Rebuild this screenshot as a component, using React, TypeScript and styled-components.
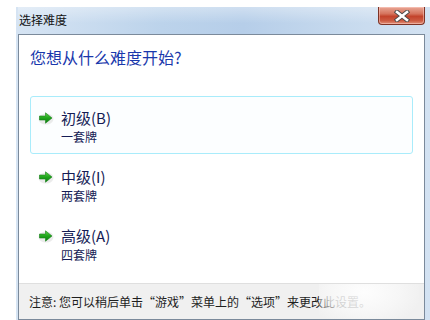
import styled, { createGlobalStyle } from "styled-components";

const GlobalStyle = createGlobalStyle`
  html, body {
    margin: 0;
    padding: 0;
    background: #ffffff;
  }
  body {
    font-family: "Noto Sans CJK SC", "Noto Sans", sans-serif;
  }
`;

interface Level {
  title: string;
  desc: string;
  selected?: boolean;
}

const levels: Level[] = [
  { title: "初级(B)", desc: "一套牌", selected: true },
  { title: "中级(I)", desc: "两套牌" },
  { title: "高级(A)", desc: "四套牌" },
];

function GreenArrow() {
  return (
    <svg width="16" height="14" viewBox="0 0 16 14">
      <defs>
        <linearGradient id="ag" x1="0" y1="0" x2="0" y2="1">
          <stop offset="0" stopColor="#5fd34a" />
          <stop offset="0.5" stopColor="#1fa51b" />
          <stop offset="1" stopColor="#0c7d12" />
        </linearGradient>
      </defs>
      <ellipse cx="8" cy="8" rx="7.5" ry="5.5" fill="#e2e2e2" opacity="0.7" />
      <path
        d="M1.5 5 H7.5 V1.8 L14 7 L7.5 12.2 V9 H1.5 Z"
        fill="url(#ag)"
        stroke="#17801a"
        strokeWidth="0.6"
        strokeLinejoin="round"
      />
    </svg>
  );
}

function CloseGlyph() {
  return (
    <svg width="16" height="12" viewBox="0 0 16 12">
      <path
        d="M3 2 L13 10 M13 2 L3 10"
        stroke="#4a4a4a"
        strokeWidth="4.4"
        strokeLinecap="square"
      />
      <path
        d="M3 2 L13 10 M13 2 L3 10"
        stroke="#ffffff"
        strokeWidth="2.6"
        strokeLinecap="square"
      />
    </svg>
  );
}

export default function App() {
  return (
    <>
      <GlobalStyle />
      <Window>
        <TitleBar>
          <TitleText>选择难度</TitleText>
          <CloseButton>
            <CloseGlyph />
          </CloseButton>
        </TitleBar>
        <Panel>
          <Heading>您想从什么难度开始?</Heading>
          <OptionList>
            {levels.map((lv) => (
              <OptionLink key={lv.title} $selected={lv.selected}>
                <ArrowBox>
                  <GreenArrow />
                </ArrowBox>
                <OptionText>
                  <OptionTitle>{lv.title}</OptionTitle>
                  <OptionDesc>{lv.desc}</OptionDesc>
                </OptionText>
              </OptionLink>
            ))}
          </OptionList>
          <Footer>
            <FooterText>
              注意: 您可以稍后单击“游戏”菜单上的“选项”来更改此设置。
            </FooterText>
            <Watermark />
          </Footer>
        </Panel>
      </Window>
    </>
  );
}

const Window = styled.div`
  margin: 7px 0 0 16px;
  width: 414px;
  height: 313px;
  box-sizing: border-box;
  padding: 0 5px 0 2px;
  display: flex;
  flex-direction: column;
  background: linear-gradient(
    90deg,
    #d6e4f3 0%,
    #bcd3eb 35%,
    #b6cee9 55%,
    #c7daee 80%,
    #d3e2f2 100%
  );
`;

const TitleBar = styled.div`
  height: 27px;
  display: flex;
  justify-content: space-between;
  align-items: flex-start;
  padding-left: 1px;
  background: linear-gradient(
    180deg,
    rgba(255, 255, 255, 0.35) 0%,
    rgba(255, 255, 255, 0) 60%
  );
`;

const TitleText = styled.span`
  margin-top: 5px;
  font-size: 12px;
  line-height: 16px;
  color: #111111;
`;

const CloseButton = styled.div`
  width: 45px;
  height: 17px;
  display: flex;
  align-items: center;
  justify-content: center;
  border: 1px solid #7d3326;
  border-top: none;
  border-radius: 0 0 4px 4px;
  background: linear-gradient(
    180deg,
    #e9a796 0%,
    #d5735c 40%,
    #c3432b 55%,
    #cc5a41 80%,
    #e0917a 100%
  );
  box-shadow: inset 0 0 0 1px rgba(255, 210, 200, 0.5);
`;

const Panel = styled.div`
  flex: 1;
  display: flex;
  flex-direction: column;
  background: #ffffff;
  border: 1px solid #7b8a9b;
`;

const Heading = styled.div`
  margin: 12px 0 0 11px;
  font-size: 16px;
  line-height: 20px;
  color: #1a38ac;
`;

const OptionList = styled.div`
  margin: 29px 11px 0 11px;
  display: flex;
  flex-direction: column;
  gap: 1px;
`;

const OptionLink = styled.div<{ $selected?: boolean }>`
  height: 58px;
  box-sizing: border-box;
  display: flex;
  align-items: flex-start;
  padding: 11px 8px 0 7px;
  border: 1px solid ${(p) => (p.$selected ? "#a9ecfb" : "transparent")};
  border-radius: 3px;
  background: ${(p) => (p.$selected ? "#fcfeff" : "transparent")};
`;

const ArrowBox = styled.div`
  width: 16px;
  height: 14px;
  margin-top: 3px;
  margin-right: 7px;
  display: flex;
`;

const OptionText = styled.div`
  display: flex;
  flex-direction: column;
`;

const OptionTitle = styled.div`
  font-size: 15px;
  line-height: 20px;
  color: #151c55;
`;

const OptionDesc = styled.div`
  margin-top: 1px;
  font-size: 12px;
  line-height: 16px;
  color: #151c55;
`;

const Footer = styled.div`
  margin-top: auto;
  height: 35px;
  position: relative;
  overflow: hidden;
  display: flex;
  align-items: center;
  padding-left: 10px;
  background: #f0f0f0;
  border-top: 1px solid #dfdfdf;
`;

const FooterText = styled.span`
  font-size: 12px;
  line-height: 16px;
  color: #1e1e1e;
  white-space: nowrap;
`;

const Watermark = styled.div`
  position: absolute;
  left: 300px;
  top: -14px;
  width: 100px;
  height: 56px;
  background: radial-gradient(
    ellipse at 45% 40%,
    rgba(255, 255, 255, 0.9) 0%,
    rgba(248, 248, 248, 0.8) 45%,
    rgba(240, 240, 240, 0) 75%
  );
`;
